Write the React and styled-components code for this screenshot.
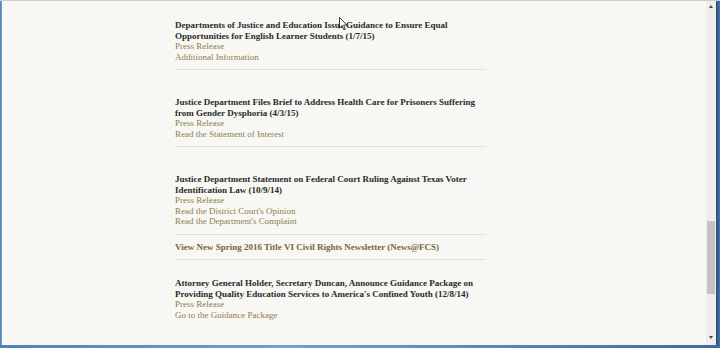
import styled, { createGlobalStyle } from "styled-components";

const Global = createGlobalStyle`
  html, body {
    margin: 0;
    padding: 0;
    background: #3b6594;
  }
`;

// window frame

const Frame = styled.div`
  width: 720px;
  height: 348px;
  display: flex;
  flex-direction: column;
  overflow: hidden;
  background: #3b6594;
  position: relative;
`;

const TopEdge = styled.div`
  height: 1px;
  background: #cfcfcc;
`;

const Body = styled.div`
  flex: 1;
  display: flex;
  min-height: 0;
`;

const LeftEdge = styled.div`
  width: 2px;
  background: linear-gradient(to right, #4e7cae, #7fa6cf);
`;

const RightEdge = styled.div`
  width: 4px;
  background: linear-gradient(to right, #2a4a75, #4a77a8);
`;

const BottomEdge = styled.div`
  height: 3px;
  background: linear-gradient(to right, #4f82b8, #6fa1d2 40%, #3d6c9f);
`;

// scrollbar

const Scrollbar = styled.div`
  width: 10px;
  background: #eeeeec;
  display: flex;
  flex-direction: column;
  align-items: center;
`;

const Arrow = styled.div`
  width: 0;
  height: 0;
  margin-top: ${(p) => (p.$down ? "auto" : "4px")};
  margin-bottom: ${(p) => (p.$down ? "6px" : "0")};
  border-left: 2.5px solid transparent;
  border-right: 2.5px solid transparent;
  ${(p) =>
    p.$down
      ? "border-top: 3px solid #4a4a4a;"
      : "border-bottom: 3px solid #4a4a4a;"}
`;

const Thumb = styled.div`
  width: 8px;
  height: 73px;
  margin-top: 213px;
  background: #c3c3c1;
`;

// page

const Page = styled.div`
  flex: 1;
  background: #f7f7f3;
  padding-left: 173px;
  font-family: "Liberation Serif", "Times New Roman", serif;
  font-size: 9px;
  line-height: 10.5px;
`;

const List = styled.ul`
  list-style: none;
  margin: 0;
  padding: 0;
  width: 311px;
`;

const Item = styled.li`
  padding-top: ${(p) => p.$top}px;
  padding-bottom: 7px;
  border-bottom: ${(p) => (p.$last ? "none" : "1px solid #e2e2dc")};
`;

const Title = styled.div`
  font-weight: bold;
  color: #2a2a2a;
`;

const Link = styled.a`
  display: block;
  color: #8f7d4f;
  text-decoration: none;
  cursor: pointer;
`;

const Newsletter = styled.a`
  display: block;
  font-weight: bold;
  color: #77683a;
  text-decoration: none;
`;

const Cursor = styled.svg`
  position: absolute;
  left: 339px;
  top: 17px;
`;

const items = [
  {
    top: 19,
    title:
      "Departments of Justice and Education Issue Guidance to Ensure Equal Opportunities for English Learner Students (1/7/15)",
    links: ["Press Release", "Additional Information"],
  },
  {
    top: 27,
    title:
      "Justice Department Files Brief to Address Health Care for Prisoners Suffering from Gender Dysphoria (4/3/15)",
    links: ["Press Release", "Read the Statement of Interest"],
  },
  {
    top: 27,
    title:
      "Justice Department Statement on Federal Court Ruling Against Texas Voter Identification Law (10/9/14)",
    links: [
      "Press Release",
      "Read the District Court's Opinion",
      "Read the Department's Complaint",
    ],
  },
];

export default function App() {
  return (
    <>
      <Global />
      <Frame>
        <TopEdge />
        <Body>
          <LeftEdge />
          <Page>
            <List>
              {items.map((it, i) => (
                <Item key={i} $top={it.top}>
                  <Title>{it.title}</Title>
                  {it.links.map((l) => (
                    <Link key={l}>{l}</Link>
                  ))}
                </Item>
              ))}
              <Item $top={7}>
                <Newsletter>
                  View New Spring 2016 Title VI Civil Rights Newsletter (News@FCS)
                </Newsletter>
              </Item>
              <Item $top={18} $last>
                <Title>
                  Attorney General Holder, Secretary Duncan, Announce Guidance
                  Package on Providing Quality Education Services to America's
                  Confined Youth (12/8/14)
                </Title>
                <Link>Press Release</Link>
                <Link>Go to the Guidance Package</Link>
              </Item>
            </List>
          </Page>
          <Scrollbar>
            <Arrow />
            <Thumb />
            <Arrow $down />
          </Scrollbar>
          <RightEdge />
        </Body>
        <BottomEdge />
        <Cursor width="9" height="14" viewBox="0 0 9 14">
          <path
            d="M0.5 0.5 L0.5 11 L3 8.6 L4.8 12.8 L6.3 12.2 L4.6 8.1 L8 8.1 Z"
            fill="#fff"
            stroke="#222"
            strokeWidth="0.9"
          />
        </Cursor>
      </Frame>
    </>
  );
}
